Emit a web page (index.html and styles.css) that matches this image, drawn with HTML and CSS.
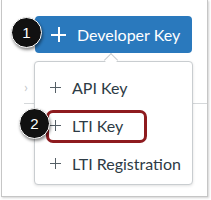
FILE: index.html
```html
<!DOCTYPE html>
<html>
<head>
<meta charset="utf-8">
<link rel="stylesheet" href="styles.css">
</head>
<body>
<div class="frame">
  <div class="toolbar">
    <button class="dev-btn"><span class="plus plus-lg"></span><span>Developer Key</span></button>
  </div>
  <div class="table">
    <div class="row"><span class="chev">›</span></div>
    <div class="row-line"></div>
  </div>

  <div class="menu">
    <span class="caret"></span>
    <div class="item"><span class="plus"></span><span>API Key</span></div>
    <div class="item"><span class="plus"></span><span>LTI Key</span></div>
    <div class="item"><span class="plus"></span><span>LTI Registration</span></div>
  </div>

  <div class="highlight"></div>
  <div class="badge badge-1">1</div>
  <div class="badge badge-2">2</div>
</div>
</body>
</html>
```

FILE: styles.css
```css
html, body {
  margin: 0;
  padding: 0;
  background: #ffffff;
}
body {
  width: 211px;
  height: 200px;
  overflow: hidden;
  font-family: Lato, "Liberation Sans", sans-serif;
}
.frame {
  position: relative;
  box-sizing: border-box;
  margin-left: 1px;
  width: 207px;
  height: 197px;
  border: 1px solid #c6c6c6;
  border-top: none;
  box-shadow: 1px 1px 2px rgba(0, 0, 0, 0.18);
  background: #fff;
}
.toolbar {
  padding: 16px 0 0 33px;
}
.dev-btn {
  display: flex;
  align-items: center;
  gap: 11px;
  box-sizing: border-box;
  width: 157px;
  height: 37px;
  padding: 0 0 0 16px;
  border: none;
  border-radius: 4px;
  background: #2a79bd;
  color: #fff;
  font-family: Lato, "Liberation Sans", sans-serif;
  font-size: 16px;
  line-height: 1;
}
.plus {
  position: relative;
  display: inline-block;
  width: 11px;
  height: 11px;
  flex: none;
}
.plus::before, .plus::after {
  content: "";
  position: absolute;
  background: #555f66;
}
.plus::before {
  left: 0; right: 0; top: 5px; height: 1px;
}
.plus::after {
  top: 0; bottom: 0; left: 5px; width: 1px;
}
.plus-lg {
  width: 15px;
  height: 15px;
}
.plus-lg::before {
  top: 7px; height: 1.5px; background: #fff;
}
.plus-lg::after {
  left: 7px; width: 1.5px; background: #fff;
}
.table {
  padding: 27px 0 0 22px;
}
.row {
  height: 23px;
  color: #c4c8cb;
  font-size: 14px;
  line-height: 14px;
}
.chev {
  display: inline-block;
  margin-left: 0;
}
.row-line {
  height: 1px;
  background: #d5d8da;
}
.menu {
  position: absolute;
  left: 32px;
  top: 61px;
  box-sizing: border-box;
  width: 159px;
  height: 124px;
  padding: 6px 0 4px 0;
  border: 1px solid #c9cdd0;
  border-radius: 4px;
  background: #fff;
  box-shadow: 0 1px 3px rgba(0, 0, 0, 0.12);
}
.caret {
  position: absolute;
  left: 71px;
  top: -7px;
  width: 9px;
  height: 9px;
  background: #fff;
  border-left: 1px solid #c9cdd0;
  border-top: 1px solid #c9cdd0;
  transform: rotate(45deg);
}
.item {
  display: flex;
  align-items: center;
  gap: 11px;
  height: 38px;
  padding-left: 15px;
  color: #2d3b45;
  font-size: 16px;
}
.highlight {
  position: absolute;
  left: 44px;
  top: 110px;
  box-sizing: border-box;
  width: 101px;
  height: 33px;
  border: 3px solid #8e1b1f;
  border-radius: 7px;
}
.badge {
  position: absolute;
  box-sizing: border-box;
  width: 31px;
  height: 31px;
  border-radius: 50%;
  background: #111;
  border: 1.5px solid #fff;
  box-shadow: 1px 2px 3px rgba(0, 0, 0, 0.45);
  color: #fff;
  font-family: "Liberation Sans", Arial, sans-serif;
  font-size: 15px;
  display: flex;
  align-items: center;
  justify-content: center;
}
.badge-1 {
  left: 9px;
  top: 17px;
}
.badge-2 {
  left: 17px;
  top: 108px;
}
```
